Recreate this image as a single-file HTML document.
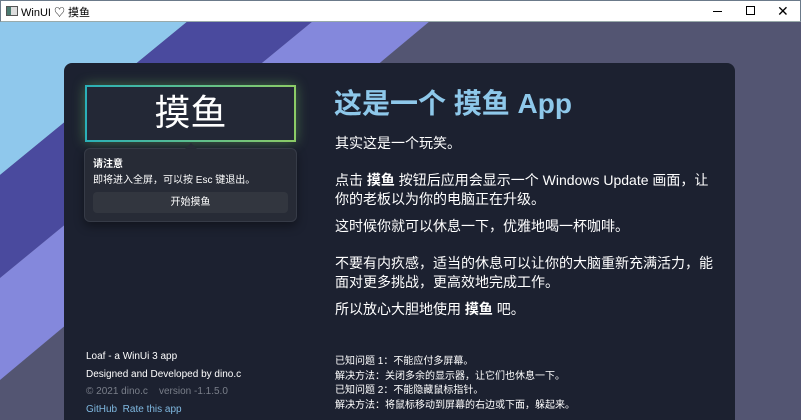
<!DOCTYPE html>
<html style="width:801px;height:420px;overflow:hidden"><head><meta charset="utf-8"><style>
*{margin:0;padding:0;box-sizing:border-box}
body{width:801px;height:420px;overflow:hidden;position:relative;font-family:"Liberation Sans","Noto Sans CJK SC",sans-serif;background:#535572}
.tb{position:absolute;left:0;top:0;width:801px;height:22px;background:#fff;border:1px solid #6b7a8a;border-bottom:1px solid #9aa;font-size:11px;color:#000}
.card{position:absolute;left:64px;top:63px;width:671px;height:370px;background:#1c2130;border-radius:8px}
.t{position:absolute;white-space:nowrap;color:#fff}
</style></head><body>
<svg style="position:absolute;left:0;top:0" width="801" height="420">
<rect x="0" y="0" width="801" height="420" fill="#535572"/>
<polygon points="0,21 188,21 0,175" fill="#8fc8ec"/>
<polygon points="188,21 313,21 0,278 0,175" fill="#4a4a9e"/>
<polygon points="313,21 430,21 0,380 0,278" fill="#8488dc"/>
</svg>
<div class="tb">
<div style="position:absolute;left:5px;top:5px;width:12px;height:10px;border:1px solid #555;background:linear-gradient(90deg,#4a7a70 40%,#ddd 40%)"></div>
<span style="position:absolute;left:20px;top:3px">WinUI ♡ 摸鱼</span>
<div style="position:absolute;left:712px;top:10px;width:9px;height:1px;background:#000"></div>
<div style="position:absolute;left:745px;top:5px;width:9px;height:9px;border:1px solid #000"></div>
<span style="position:absolute;left:776px;top:2px;font-size:14px">✕</span>
</div>
<div class="card"></div>
<div style="position:absolute;left:85px;top:85px;width:211px;height:57px;padding:2px;background:linear-gradient(90deg,#2ab0b8,#8ccc66);box-shadow:0 0 12px rgba(120,200,100,.45)">
<div style="width:100%;height:100%;background:#232836;color:#fff;font-size:36px;text-align:center;line-height:51px">摸鱼</div></div>
<div style="position:absolute;left:84px;top:148px;width:213px;height:74px;background:#272b36;border:1px solid #363b47;border-radius:6px;box-shadow:0 4px 10px rgba(0,0,0,.4)"></div>
<div style="position:absolute;left:185px;top:143px;width:0;height:0;border-left:6px solid transparent;border-right:6px solid transparent;border-bottom:6px solid #272b36"></div>
<div class="t" style="left:93px;top:155px;font-size:10px;font-weight:bold">请注意</div>
<div class="t" style="left:93px;top:171px;font-size:10px">即将进入全屏，可以按 Esc 键退出。</div>
<div style="position:absolute;left:93px;top:192px;width:195px;height:21px;background:#32363f;border-radius:4px;color:#fff;font-size:10px;text-align:center;line-height:21px">开始摸鱼</div>
<div class="t" style="left:334px;top:82px;font-size:28px;font-weight:bold;color:#8ec8ea">这是一个 摸鱼 App</div>
<div style="position:absolute;left:335px;top:134px;font-size:14px;color:#fff;line-height:19px;white-space:nowrap">
<div>其实这是一个玩笑。</div>
<div style="margin-top:18px">点击 <b>摸鱼</b> 按钮后应用会显示一个 Windows Update 画面，让<br>你的老板以为你的电脑正在升级。</div>
<div style="margin-top:8px">这时候你就可以休息一下，优雅地喝一杯咖啡。</div>
<div style="margin-top:18px">不要有内疚感，适当的休息可以让你的大脑重新充满活力，能<br>面对更多挑战，更高效地完成工作。</div>
<div style="margin-top:8px">所以放心大胆地使用 <b>摸鱼</b> 吧。</div>
</div>
<div style="position:absolute;left:86px;top:348px;font-size:10px;line-height:17.5px;color:#fff;white-space:nowrap">
<div>Loaf - a WinUi 3 app</div>
<div>Designed and Developed by dino.c</div>
<div style="color:#7a7f8a">© 2021 dino.c &nbsp;&nbsp; version -1.1.5.0</div>
<div style="color:#7fb8e0">GitHub &nbsp;Rate this app</div>
</div>
<div style="position:absolute;left:335px;top:355px;font-size:10px;line-height:14.5px;color:#fff;white-space:nowrap">
<div>已知问题 1：不能应付多屏幕。</div>
<div>解决方法：关闭多余的显示器，让它们也休息一下。</div>
<div>已知问题 2：不能隐藏鼠标指针。</div>
<div>解决方法：将鼠标移动到屏幕的右边或下面，躲起来。</div>
</div>
</body></html>
